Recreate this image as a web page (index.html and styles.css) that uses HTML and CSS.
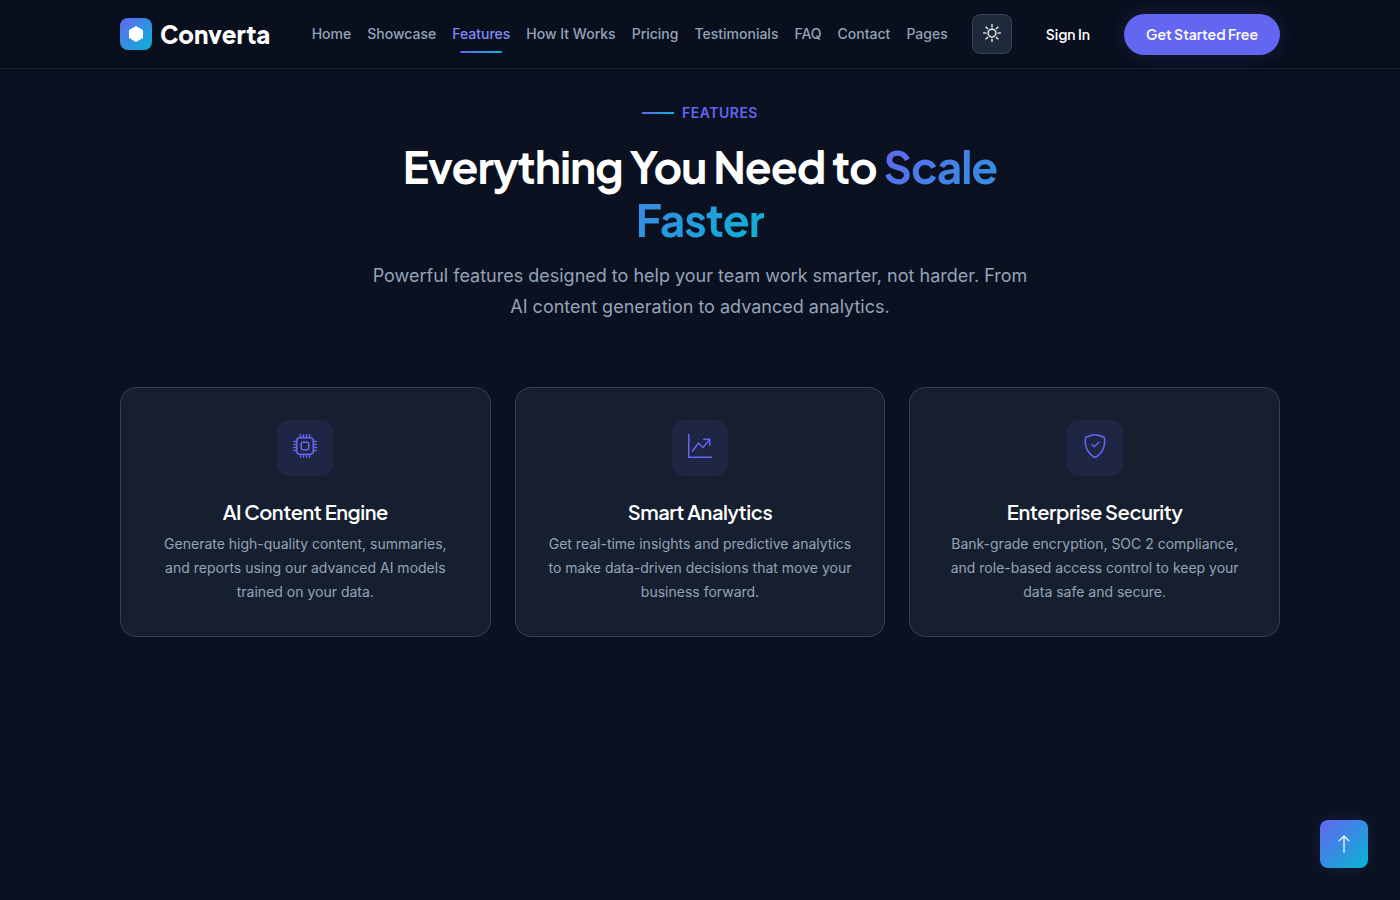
FILE: index.html
```html
<!DOCTYPE html>
<html lang="en">
<head>
<meta charset="utf-8">
<meta name="viewport" content="width=device-width, initial-scale=1">
<title>Converta</title>
<link rel="stylesheet" href="styles.css">
</head>
<body>
<header class="navbar">
  <div class="container navbar-inner">
    <a class="brand" href="#home">
      <span class="brand-icon"><svg width="16" height="16" viewBox="0 0 16 16" fill="currentColor" aria-hidden="true"><path fill-rule="evenodd" d="M8.5.134a1 1 0 0 0-1 0l-6 3.577a1 1 0 0 0-.5.866v6.846a1 1 0 0 0 .5.866l6 3.577a1 1 0 0 0 1 0l6-3.577a1 1 0 0 0 .5-.866V4.577a1 1 0 0 0-.5-.866z"/></svg></span>
      <span>Converta</span>
    </a>
    <nav class="nav-links" aria-label="Main">
      <a href="#home">Home</a>
      <a href="#showcase">Showcase</a>
      <a class="active" href="#features">Features</a>
      <a href="#how">How It Works</a>
      <a href="#pricing">Pricing</a>
      <a href="#testimonials">Testimonials</a>
      <a href="#faq">FAQ</a>
      <a href="#contact">Contact</a>
      <a href="#pages">Pages</a>
    </nav>
    <div class="nav-actions">
      <button class="theme-toggle" type="button" aria-label="Toggle theme"><svg width="18" height="18" viewBox="0 0 16 16" fill="currentColor" aria-hidden="true"><path stroke="currentColor" stroke-width=".2" d="M8 11a3 3 0 1 1 0-6 3 3 0 0 1 0 6m0 1a4 4 0 1 0 0-8 4 4 0 0 0 0 8M8 0a.5.5 0 0 1 .5.5v2a.5.5 0 0 1-1 0v-2A.5.5 0 0 1 8 0m0 13a.5.5 0 0 1 .5.5v2a.5.5 0 0 1-1 0v-2A.5.5 0 0 1 8 13m8-5a.5.5 0 0 1-.5.5h-2a.5.5 0 0 1 0-1h2a.5.5 0 0 1 .5.5M3 8a.5.5 0 0 1-.5.5h-2a.5.5 0 0 1 0-1h2A.5.5 0 0 1 3 8m10.657-5.657a.5.5 0 0 1 0 .707l-1.414 1.415a.5.5 0 1 1-.707-.708l1.414-1.414a.5.5 0 0 1 .707 0m-9.193 9.193a.5.5 0 0 1 0 .707L3.05 13.657a.5.5 0 0 1-.707-.707l1.414-1.414a.5.5 0 0 1 .707 0m9.193 2.121a.5.5 0 0 1-.707 0l-1.414-1.414a.5.5 0 0 1 .707-.707l1.414 1.414a.5.5 0 0 1 0 .707M4.464 4.465a.5.5 0 0 1-.707 0L2.343 3.05a.5.5 0 1 1 .707-.707l1.414 1.414a.5.5 0 0 1 0 .708"/></svg></button>
      <a class="btn btn-plain" href="#signin">Sign In</a>
      <a class="btn btn-primary" href="#start">Get Started Free</a>
    </div>
  </div>
</header>
<main class="features" id="features">
  <div class="container">
    <div class="section-head">
      <span class="label">Features</span>
      <h1>Everything You Need to <span class="gradient-text">Scale Faster</span></h1>
      <p>Powerful features designed to help your team work smarter, not harder. From AI content generation to advanced analytics.</p>
    </div>
    <div class="cards">
      <article class="card">
        <div class="card-icon"><svg width="24" height="24" viewBox="0 0 16 16" fill="currentColor" aria-hidden="true"><path d="M5 0a.5.5 0 0 1 .5.5V2h1V.5a.5.5 0 0 1 1 0V2h1V.5a.5.5 0 0 1 1 0V2h1V.5a.5.5 0 0 1 1 0V2A2.5 2.5 0 0 1 14 4.5h1.5a.5.5 0 0 1 0 1H14v1h1.5a.5.5 0 0 1 0 1H14v1h1.5a.5.5 0 0 1 0 1H14v1h1.5a.5.5 0 0 1 0 1H14a2.5 2.5 0 0 1-2.5 2.5v1.5a.5.5 0 0 1-1 0V14h-1v1.5a.5.5 0 0 1-1 0V14h-1v1.5a.5.5 0 0 1-1 0V14h-1v1.5a.5.5 0 0 1-1 0V14A2.5 2.5 0 0 1 2 11.5H.5a.5.5 0 0 1 0-1H2v-1H.5a.5.5 0 0 1 0-1H2v-1H.5a.5.5 0 0 1 0-1H2v-1H.5a.5.5 0 0 1 0-1H2A2.5 2.5 0 0 1 4.5 2V.5A.5.5 0 0 1 5 0m-.5 3A1.5 1.5 0 0 0 3 4.5v7A1.5 1.5 0 0 0 4.5 13h7a1.5 1.5 0 0 0 1.5-1.5v-7A1.5 1.5 0 0 0 11.5 3zM5 6.5A1.5 1.5 0 0 1 6.5 5h3A1.5 1.5 0 0 1 11 6.5v3A1.5 1.5 0 0 1 9.5 11h-3A1.5 1.5 0 0 1 5 9.5zM6.5 6a.5.5 0 0 0-.5.5v3a.5.5 0 0 0 .5.5h3a.5.5 0 0 0 .5-.5v-3a.5.5 0 0 0-.5-.5z"/></svg></div>
        <h2>AI Content Engine</h2>
        <p>Generate high-quality content, summaries, and reports using our advanced AI models trained on your data.</p>
      </article>
      <article class="card">
        <div class="card-icon"><svg width="24" height="24" viewBox="0 0 16 16" fill="currentColor" aria-hidden="true"><path fill-rule="evenodd" d="M0 0h1v15h15v1H0zm10 3.5a.5.5 0 0 1 .5-.5h4a.5.5 0 0 1 .5.5v4a.5.5 0 0 1-1 0V4.9l-3.613 4.417a.5.5 0 0 1-.74.037L7.06 6.767l-3.656 5.027a.5.5 0 0 1-.808-.588l4-5.5a.5.5 0 0 1 .758-.06l2.609 2.61L13.445 4H10.5a.5.5 0 0 1-.5-.5"/></svg></div>
        <h2>Smart Analytics</h2>
        <p>Get real-time insights and predictive analytics to make data-driven decisions that move your business forward.</p>
      </article>
      <article class="card">
        <div class="card-icon"><svg width="24" height="24" viewBox="0 0 16 16" fill="currentColor" aria-hidden="true"><path d="M5.338 1.59a61 61 0 0 0-2.837.856.48.48 0 0 0-.328.39c-.554 4.157.726 7.19 2.253 9.188a10.7 10.7 0 0 0 2.287 2.233c.346.244.652.42.893.533q.18.085.293.118a1 1 0 0 0 .101.025 1 1 0 0 0 .1-.025q.114-.034.294-.118c.24-.113.547-.29.893-.533a10.7 10.7 0 0 0 2.287-2.233c1.527-1.997 2.807-5.031 2.253-9.188a.48.48 0 0 0-.328-.39c-.651-.213-1.75-.56-2.837-.855C9.552 1.29 8.531 1.067 8 1.067c-.53 0-1.552.223-2.662.524zM5.072.56C6.157.265 7.31 0 8 0s1.843.265 2.928.56c1.11.3 2.229.655 2.887.87a1.54 1.54 0 0 1 1.044 1.262c.596 4.477-.787 7.795-2.465 9.99a11.8 11.8 0 0 1-2.517 2.453 7 7 0 0 1-1.048.625c-.28.132-.581.24-.829.24s-.548-.108-.829-.24a7 7 0 0 1-1.048-.625 11.8 11.8 0 0 1-2.517-2.453C1.928 10.487.545 7.169 1.141 2.692A1.54 1.54 0 0 1 2.185 1.43 63 63 0 0 1 5.072.56"/><path d="M10.854 5.146a.5.5 0 0 1 0 .708l-3 3a.5.5 0 0 1-.708 0l-1.5-1.5a.5.5 0 1 1 .708-.708L7.5 7.793l2.646-2.647a.5.5 0 0 1 .708 0"/></svg></div>
        <h2>Enterprise Security</h2>
        <p>Bank-grade encryption, SOC 2 compliance, and role-based access control to keep your data safe and secure.</p>
      </article>
    </div>
  </div>
</main>
<a class="to-top" href="#home" aria-label="Back to top"><svg width="20" height="20" viewBox="0 0 16 16" fill="currentColor" aria-hidden="true"><path fill-rule="evenodd" d="M8 15a.5.5 0 0 0 .5-.5V2.707l3.146 3.147a.5.5 0 0 0 .708-.708l-4-4a.5.5 0 0 0-.708 0l-4 4a.5.5 0 1 0 .708.708L7.5 2.707V14.5a.5.5 0 0 0 .5.5"/></svg></a>
</body>
</html>
```

FILE: styles.css
```css
:root {
  --primary: #6366f1;
  --accent: #06b6d4;
  --gradient: linear-gradient(135deg, var(--primary), var(--accent));
  --muted: #94a3b8;
  --display: "Plus Jakarta Sans", Inter, sans-serif;
}
* { box-sizing: border-box; }
body {
  margin: 0;
  background: #0b1120;
  color: #fff;
  font-family: Inter, sans-serif;
}
a { color: inherit; text-decoration: none; }
h1, h2, p { margin: 0; }
svg { display: block; flex: none; }
.container { max-width: 1160px; margin: 0 auto; }

.navbar {
  border-bottom: 1px solid #161d2c;
  background: #0a0f1e;
}
.navbar-inner {
  display: flex;
  align-items: center;
  height: 68px;
}
.brand {
  display: flex;
  align-items: center;
  gap: 8px;
  font-family: var(--display);
  font-size: 24px;
  font-weight: 800;
}
.brand-icon {
  display: grid;
  place-items: center;
  width: 32px;
  height: 32px;
  border-radius: 8px;
  background: var(--gradient);
}
.nav-links {
  display: flex;
  gap: 16px;
  margin-left: auto;
}
.nav-links a {
  position: relative;
  color: var(--muted);
  font-size: 14px;
  font-weight: 500;
  line-height: 20px;
  white-space: nowrap;
}
.nav-links .active { color: #818cf8; }
.nav-links .active::after {
  content: "";
  position: absolute;
  left: 8px;
  right: 8px;
  bottom: -9px;
  height: 2px;
  border-radius: 1px;
  background: linear-gradient(90deg, var(--primary), var(--accent));
}
.nav-actions {
  display: flex;
  align-items: center;
  gap: 12px;
  margin-left: 24px;
}
.theme-toggle {
  display: grid;
  place-items: center;
  width: 40px;
  height: 40px;
  padding: 0 0 3px;
  border: 1px solid #334155;
  border-radius: 8px;
  background: #1e293b;
  color: #fff;
}
.btn {
  padding: 10px 22px;
  border-radius: 24px;
  font-family: var(--display);
  font-size: 14px;
  font-weight: 600;
  line-height: 21px;
  white-space: nowrap;
}
.btn-primary {
  background: var(--primary);
  box-shadow: 0 0 20px rgba(99, 102, 241, 0.15);
}

.features { padding: 32px 0 64px; }
.section-head {
  max-width: 700px;
  margin: 0 auto 65px;
  text-align: center;
}
.label {
  display: flex;
  align-items: center;
  justify-content: center;
  gap: 8px;
  margin-bottom: 15px;
  color: var(--primary);
  font-size: 14px;
  font-weight: 600;
  line-height: 24px;
  letter-spacing: 0.5px;
  text-transform: uppercase;
}
.label::before {
  content: "";
  width: 32px;
  height: 2px;
  background: linear-gradient(90deg, var(--primary), var(--accent));
}
h1 {
  margin-bottom: 14px;
  font-family: var(--display);
  font-size: 44px;
  font-weight: 700;
  line-height: 53px;
  letter-spacing: -1px;
}
.gradient-text {
  background: var(--gradient);
  -webkit-background-clip: text;
  background-clip: text;
  color: transparent;
}
.section-head p {
  max-width: 670px;
  margin: 0 auto;
  color: var(--muted);
  font-size: 18px;
  line-height: 31px;
}
.cards {
  display: grid;
  grid-template-columns: repeat(3, 1fr);
  gap: 24px;
}
.card {
  padding: 32px;
  border: 1px solid #334155;
  border-radius: 16px;
  background: #161f2f;
  text-align: center;
}
.card-icon {
  display: grid;
  place-items: center;
  width: 56px;
  height: 56px;
  margin: 0 auto 24px;
  padding-bottom: 4px;
  border-radius: 12px;
  background: #1e2643;
  color: var(--primary);
}
.card h2 {
  margin-bottom: 8px;
  font-family: var(--display);
  font-size: 20px;
  font-weight: 600;
  line-height: 24px;
  letter-spacing: -0.02em;
}
.card p {
  color: var(--muted);
  font-size: 14px;
  line-height: 24px;
}
.to-top {
  position: fixed;
  right: 32px;
  bottom: 32px;
  display: grid;
  place-items: center;
  width: 48px;
  height: 48px;
  border-radius: 8px;
  background: var(--gradient);
  box-shadow: 0 0 20px rgba(99, 102, 241, 0.15);
}
```
